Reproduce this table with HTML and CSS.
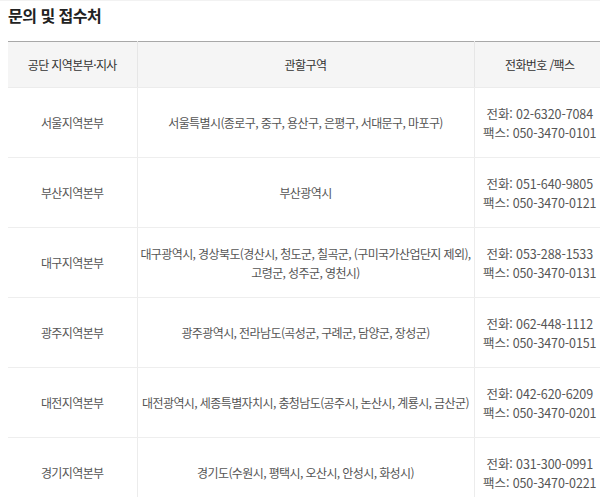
FILE: index.html
```html
<!DOCTYPE html>
<html lang="ko">
<head>
<meta charset="utf-8">
<link rel="stylesheet" href="styles.css">
</head>
<body>
<div class="page">
  <h2 class="title">문의 및 접수처</h2>
  <table class="contact">
    <colgroup>
      <col class="c1"><col class="c2"><col class="c3">
    </colgroup>
    <thead>
      <tr><th>공단 지역본부·지사</th><th>관할구역</th><th>전화번호 /팩스</th></tr>
    </thead>
    <tbody>
      <tr><td>서울지역본부</td><td>서울특별시(종로구, 중구, 용산구, 은평구, 서대문구, 마포구)</td><td class="tel">전화: 02-6320-7084<br>팩스: 050-3470-0101</td></tr>
      <tr><td>부산지역본부</td><td>부산광역시</td><td class="tel">전화: 051-640-9805<br>팩스: 050-3470-0121</td></tr>
      <tr><td>대구지역본부</td><td>대구광역시, 경상북도(경산시, 청도군, 칠곡군, (구미국가산업단지 제외),<br>고령군, 성주군, 영천시)</td><td class="tel">전화: 053-288-1533<br>팩스: 050-3470-0131</td></tr>
      <tr><td>광주지역본부</td><td>광주광역시, 전라남도(곡성군, 구례군, 담양군, 장성군)</td><td class="tel">전화: 062-448-1112<br>팩스: 050-3470-0151</td></tr>
      <tr><td>대전지역본부</td><td>대전광역시, 세종특별자치시, 충청남도(공주시, 논산시, 계룡시, 금산군)</td><td class="tel">전화: 042-620-6209<br>팩스: 050-3470-0201</td></tr>
      <tr><td>경기지역본부</td><td>경기도(수원시, 평택시, 오산시, 안성시, 화성시)</td><td class="tel">전화: 031-300-0991<br>팩스: 050-3470-0221</td></tr>
    </tbody>
  </table>
</div>
</body>
</html>
```
FILE: styles.css
```css
html, body {
  margin: 0;
  padding: 0;
  background: #fff;
  overflow: hidden;
}
body {
  font-family: "Noto Sans CJK KR", "Noto Sans", sans-serif;
  border-top: 1px solid #f2f2f2;
}
.page {
  padding: 0 0 0 8px;
  width: 597px;
}
.title {
  margin: 0;
  padding-top: 2px;
  height: 40px;
  box-sizing: border-box;
  font-size: 16px;
  font-weight: 700;
  color: #222;
  letter-spacing: -0.5px;
  line-height: 24px;
}
.contact {
  width: 597px;
  border-collapse: collapse;
  table-layout: fixed;
  border-top: 1px solid #a8a8a8;
  font-size: 12px;
  letter-spacing: -0.6px;
  color: #555;
}
.c1 { width: 129px; }
.c2 { width: 337px; }
.contact th {
  background: #f5f5f5;
  height: 45px;
  font-weight: 400;
  color: #333;
  border-bottom: 1px solid #ececec;
  border-left: 1px solid #e6e6e6;
  padding: 0;
  text-align: center;
  vertical-align: middle;
}
.contact td {
  height: 69px;
  padding: 0;
  text-align: center;
  vertical-align: middle;
  line-height: 19px;
  border-bottom: 1px solid #eeeeee;
  border-left: 1px solid #ececec;
}
.contact th:first-child, .contact td:first-child { border-left: 0; }
.contact td.tel { font-size: 12.5px; letter-spacing: -0.1px; }
```
